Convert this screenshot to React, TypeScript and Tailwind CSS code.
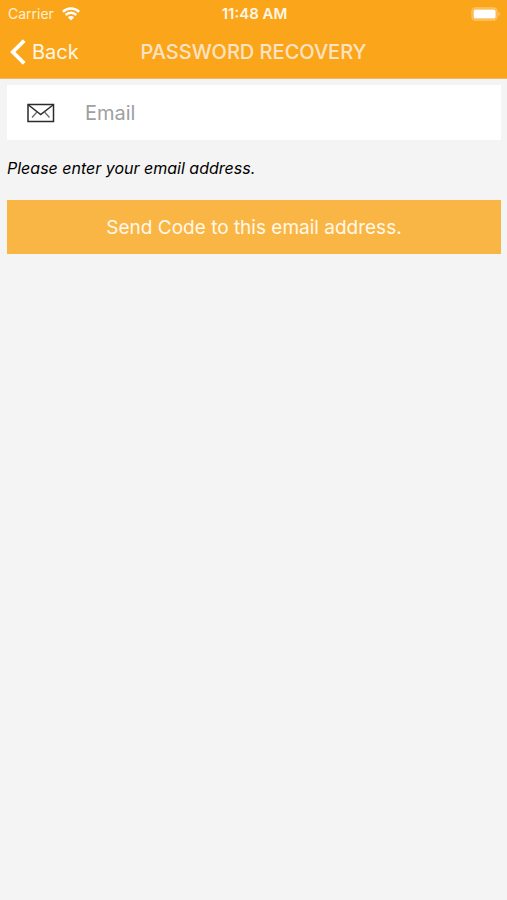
import { useState } from 'react';
import type { FormEvent } from 'react';

function WifiIcon() {
  return (
    <svg width="18" height="14" viewBox="0 0 18 14" fill="none" stroke="currentColor" strokeWidth="2.5" aria-hidden="true">
      <path d="M0.9 4.8C5.4 0.4 12.6 0.4 17.1 4.8" />
      <path d="M3.7 8C6.7 5.1 11.3 5.1 14.3 8" />
      <path d="M5.9 10.3C7.6 8.7 10.4 8.7 12.1 10.3L9 13.4Z" fill="currentColor" stroke="none" />
    </svg>
  );
}

function BatteryIcon() {
  return (
    <svg width="30" height="14" viewBox="0 0 30 14" fill="none" aria-hidden="true">
      <rect x="1" y="1" width="25" height="12" rx="3.5" stroke="#fff" strokeOpacity="0.35" strokeWidth="1.4" />
      <rect x="2.6" y="2.4" width="22" height="9" rx="1.5" fill="#fff" />
      <path d="M27.5 4.8C29.3 5.4 29.3 8.6 27.5 9.2Z" fill="#fff" fillOpacity="0.35" />
    </svg>
  );
}

function BackIcon() {
  return (
    <svg width="16" height="26" viewBox="0 0 16 26" fill="none" stroke="currentColor" strokeWidth="3.8" aria-hidden="true">
      <path d="M14.2 1.6L2.8 13L14.2 24.4" />
    </svg>
  );
}

function EnvelopeIcon() {
  return (
    <svg width="28" height="20" viewBox="0 0 28 20" fill="none" stroke="#2b2b2b" strokeWidth="1.5" aria-hidden="true">
      <rect x="1" y="1.5" width="25.5" height="17" />
      <path d="M1.5 2L13.7 11.5L26 2" />
      <path d="M5 14.5L10 9M22.5 14.5L17.5 9" strokeWidth="1.2" stroke="#666" />
    </svg>
  );
}

export default function App() {
  const [email, setEmail] = useState('');

  function handleSubmit(e: FormEvent) {
    e.preventDefault();
  }

  return (
    <div className="min-h-screen bg-[#f4f4f4] font-['Inter','Liberation_Sans',sans-serif]">
      <header className="bg-[#fba61a] text-white border-b border-[#f0b866]">
        {/* Status bar */}
        <div className="grid grid-cols-[1fr_auto_1fr] items-center h-7 pl-2 pr-1.5">
          <div className="flex items-center gap-2 text-sm text-[#fff0d4]">
            Carrier
            <span className="text-white"><WifiIcon /></span>
          </div>
          <div className="text-[15px] font-semibold text-[#fff6e6]">11:48 AM</div>
          <div className="flex justify-end">
            <BatteryIcon />
          </div>
        </div>

        {/* Navigation bar */}
        <div className="grid grid-cols-[1fr_auto_1fr] items-center h-[50px] px-2.5 pb-0.5">
          <button type="button" className="flex items-center gap-1.5 justify-self-start text-xl text-[#fff6e6]">
            <span className="text-white"><BackIcon /></span>
            Back
          </button>
          <h1 className="text-xl font-medium text-[#fde3c4]">PASSWORD RECOVERY</h1>
        </div>
      </header>

      <main className="pl-[7px] pr-[6px] pt-[6px]">
        <form onSubmit={handleSubmit}>
          <label className="flex items-center h-[55px] bg-white pl-5">
            <EnvelopeIcon />
            <input
              type="email"
              aria-label="Email"
              placeholder="Email"
              value={email}
              onChange={(e) => setEmail(e.target.value)}
              className="flex-1 min-w-0 h-full pl-[30px] pr-4 text-xl text-gray-900 placeholder:text-[#a0a0a0] outline-none"
            />
          </label>

          <p className="mt-4 text-base leading-6 italic text-black">Please enter your email address.</p>

          <button type="submit" className="mt-5 w-full h-[54px] pt-0.5 bg-[#fab645] text-[19px] text-[#fff8ea]">
            Send Code to this email address.
          </button>
        </form>
      </main>
    </div>
  );
}
